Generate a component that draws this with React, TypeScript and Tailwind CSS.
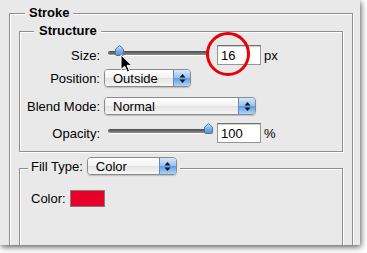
import React from "react";

function Arrows() {
  return (
    <svg width="7" height="11" viewBox="0 0 7 11">
      <polygon points="3.5,1 6.5,4.5 0.5,4.5" fill="#111" />
      <polygon points="0.5,6.5 6.5,6.5 3.5,10" fill="#111" />
    </svg>
  );
}

function Popup({ w, label }: { w: string; label: string }) {
  return (
    <div className={`${w} h-[18px] flex rounded-[4px] border border-[#8a8a8a] overflow-hidden shadow-[0_1px_1px_rgba(0,0,0,0.18)]`}>
      <div className="flex-1 flex items-center pl-[8px] text-[13px] leading-none text-black bg-[linear-gradient(#ffffff,#f2f2f2_50%,#e4e4e4_52%,#f6f6f6)]">
        {label}
      </div>
      <div className="w-[17px] flex items-center justify-center border-l border-[#6f86a6] bg-[linear-gradient(#d6e8fc,#94c0f2_50%,#5f9de7_52%,#acd4fb)]">
        <Arrows />
      </div>
    </div>
  );
}

function Slider({ thumb }: { thumb: string }) {
  return (
    <div className="relative w-[109px] h-[20px]">
      <div className="mx-[4px] mt-[6px] h-[4px] rounded-full bg-[linear-gradient(#4a4a4a,#8f8f8f)] shadow-[0_1px_0_#fff]" />
      <svg className={`absolute top-0 ${thumb}`} width="9" height="11" viewBox="0 0 9 11">
        <defs>
          <linearGradient id="thumbFill" x1="0" y1="0" x2="0" y2="1">
            <stop offset="0" stopColor="#d4e7fb" />
            <stop offset="0.5" stopColor="#7fb2ee" />
            <stop offset="1" stopColor="#4d8fe0" />
          </linearGradient>
        </defs>
        <path d="M0.5,4.2 L4.5,0.5 L8.5,4.2 L8.5,9.5 Q8.5,10.5 7.5,10.5 L1.5,10.5 Q0.5,10.5 0.5,9.5 Z" fill="url(#thumbFill)" stroke="#5b6f8e" strokeWidth="1" />
      </svg>
    </div>
  );
}

function Field({ value }: { value: string }) {
  return (
    <div className="w-[44px] h-[20px] bg-white border border-[#959595] border-t-[#6e6e6e] shadow-[inset_0_1px_1px_rgba(0,0,0,0.18)] pl-[3px] flex items-center text-[13px] leading-none text-black">
      {value}
    </div>
  );
}

function Row({ label, children, className }: { label: string; children: React.ReactNode; className: string }) {
  return (
    <div className={`flex items-center ${className}`}>
      <div className="w-[80px] text-right text-[13px] leading-none text-black">{label}</div>
      <div className="ml-[4px] flex items-center">{children}</div>
    </div>
  );
}

const groove = "border border-[#8f8f8f] shadow-[1px_1px_0_#fff,inset_1px_1px_0_#fff]";

export default function App() {
  return (
    <div className="w-[367px] h-[253px] bg-white overflow-hidden font-['Liberation_Sans',Arial,sans-serif]">
      <div className="relative w-[360px] h-[245px] bg-[#e9e9e9] overflow-hidden shadow-[1px_2px_6px_rgba(0,0,0,0.65)] pt-[5px] pl-[9px]">
        <fieldset className={`${groove} w-[344px] h-[300px] px-[9px]`}>
          <legend className="ml-[6px] px-[4px] bg-[#e9e9e9] text-[13px] leading-[16px] font-bold text-black">Stroke</legend>

          <fieldset className={`${groove} mt-[2px] w-[324px] h-[129px]`}>
            <legend className="ml-[14px] pl-[5px] pr-[4px] bg-[#e9e9e9] text-[13px] leading-[16px] font-bold text-black">Structure</legend>

            <Row label="Size:" className="mt-[6px] h-[20px]">
              <Slider thumb="left-[11px]" />
              <div className="ml-[4px]"><Field value="16" /></div>
              <span className="ml-[3px] text-[13px] leading-none">px</span>
            </Row>
            <Row label="Position:" className="mt-[4px] h-[18px]">
              <Popup w="w-[87px]" label="Outside" />
            </Row>
            <Row label="Blend Mode:" className="mt-[10px] h-[18px]">
              <Popup w="w-[152px]" label="Normal" />
            </Row>
            <Row label="Opacity:" className="mt-[8px] h-[20px]">
              <Slider thumb="left-[100px]" />
              <div className="ml-[4px]"><Field value="100" /></div>
              <span className="ml-[3px] text-[13px] leading-none">%</span>
            </Row>
          </fieldset>

          <fieldset className={`${groove} mt-[5px] w-[324px] h-[200px]`}>
            <legend className="ml-[8px] pl-[3px] pr-[3px] pb-[4px] bg-[#e9e9e9]">
              <div className="flex items-center">
                <span className="text-[13px] leading-none text-black">Fill Type:</span>
                <div className="ml-[4px]"><Popup w="w-[90px]" label="Color" /></div>
              </div>
            </legend>
            <div className="mt-[11px] pl-[11px] flex items-center">
              <span className="text-[13px] leading-none text-black">Color:</span>
              <div className="ml-[4px] w-[35px] h-[17px] bg-[#e6002a] border border-[#7f7f7f]" />
            </div>
          </fieldset>
        </fieldset>

        <svg className="absolute left-[205px] top-[31px]" width="46" height="46" viewBox="0 0 46 46">
          <circle cx="23" cy="23" r="20.5" fill="none" stroke="#e8000b" strokeWidth="3" />
        </svg>

        <svg className="absolute left-[120px] top-[54px]" width="13" height="19" viewBox="0 0 13 19">
          <path d="M1,1 L1,15.5 L4.6,12.2 L7.3,18 L9.6,17 L7,11.4 L11.8,11.4 Z" fill="#000" stroke="#fff" strokeWidth="1" strokeLinejoin="round" />
        </svg>
      </div>
    </div>
  );
}
